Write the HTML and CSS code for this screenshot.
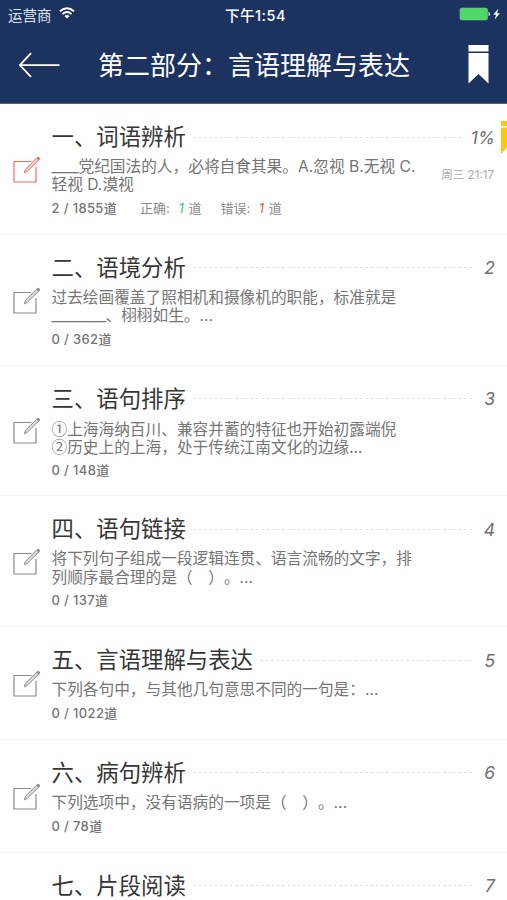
FILE: index.html
```
<!DOCTYPE html>
<html lang="zh-CN">
<head>
<meta charset="utf-8">
<title>第二部分：言语理解与表达</title>
<link rel="stylesheet" href="styles.css">
</head>
<body>
<svg class="defs" width="0" height="0">
  <symbol id="edit" viewBox="0 0 28 28">
    <path d="M18.500 5.500H1v20.500h22V11" fill="none" stroke="currentColor" stroke-width="1.200"/>
    <path d="M11.300 16.800l1.200-3.500L24.200 1.700q1-.8 1.900 0t.1 1.900L14.300 15.300z" fill="currentColor" fill-opacity=".3" stroke="currentColor" stroke-width="1"/>
    <path d="M23.500 2.300l2.200 2.200 1.300-1.700-1.600-1.800z" fill="currentColor"/>
  </symbol>
</svg>
<header class="top">
  <div class="status">
    <div class="carrier">运营商
      <svg width="16" height="12" viewBox="0 0 16 12" fill="none" stroke="#fff" stroke-width="1.9"><path d="M1 4.300Q8-1.900 15 4.300M3.500 7Q8 3.100 12.500 7"/><path d="M8 11.600L5.500 9Q8 7 10.500 9z" fill="#fff" stroke="none"/></svg>
    </div>
    <div class="clock">下午1:54</div>
    <div class="power">
      <svg width="42" height="14" viewBox="0 0 42 14"><rect x="1" y="1" width="27.600" height="12" rx="1.800" fill="#4cd964" stroke="#8fb3a5" stroke-width=".6"/><path d="M29.500 5q1.600.2 1.600 2T29.500 9z" fill="#dfe6ee"/><path d="M39.500 1.500L34.300 7.700h2.800l-1.400 4.900 5.200-6.300h-2.900z" fill="#fff"/></svg>
    </div>
  </div>
  <div class="nav">
    <svg class="back" width="42" height="26" viewBox="0 0 42 26" fill="none" stroke="#fff" stroke-width="1.800"><path d="M12 1.200L.9 13.200 12 24.800M.9 13.200H40.500"/></svg>
    <h1>第二部分：言语理解与表达</h1>
    <svg class="mark" width="21" height="39" viewBox="0 0 21 39" fill="#fff"><path d="M.5 0h20v6.500H.5zM.5 8h20v30.500L10.500 29 .5 38.500z"/></svg>
  </div>
</header>
<main>
  <section class="row active">
    <svg class="icon"><use href="#edit"/></svg>
    <div class="body">
      <div class="head"><h2>一、词语辨析</h2><i class="dots"></i><em>1%</em></div>
      <p><span class="blank">____</span>党纪国法的人，必将自食其果。A.忽视 B.无视 C.<br>轻视 D.漠视</p>
      <div class="meta"><b>2 / 1855道</b><span class="right">正确: <em>1</em> 道</span><span class="wrong">错误: <em>1</em> 道</span></div>
      <time>周三 21:17</time>
    </div>
    <svg class="flag" width="6" height="33" viewBox="0 0 6 33"><path d="M0 0h6v5H0zM0 6.500h6v20L0 33z" fill="#fcc80c"/></svg>
  </section>
  <section class="row">
    <svg class="icon"><use href="#edit"/></svg>
    <div class="body">
      <div class="head"><h2>二、语境分析</h2><i class="dots"></i><em>2</em></div>
      <p>过去绘画覆盖了照相机和摄像机的职能，标准就是<br><span class="blank">________</span>、栩栩如生。...</p>
      <div class="meta"><b>0 / 362道</b></div>
    </div>
  </section>
  <section class="row">
    <svg class="icon"><use href="#edit"/></svg>
    <div class="body">
      <div class="head"><h2>三、语句排序</h2><i class="dots"></i><em>3</em></div>
      <p class="cjk">①上海海纳百川、兼容并蓄的特征也开始初露端倪<br>②历史上的上海，处于传统江南文化的边缘...</p>
      <div class="meta"><b>0 / 148道</b></div>
    </div>
  </section>
  <section class="row">
    <svg class="icon"><use href="#edit"/></svg>
    <div class="body">
      <div class="head"><h2>四、语句链接</h2><i class="dots"></i><em>4</em></div>
      <p>将下列句子组成一段逻辑连贯、语言流畅的文字，排<br>列顺序最合理的是（　）。...</p>
      <div class="meta"><b>0 / 137道</b></div>
    </div>
  </section>
  <section class="row">
    <svg class="icon"><use href="#edit"/></svg>
    <div class="body">
      <div class="head"><h2>五、言语理解与表达</h2><i class="dots"></i><em>5</em></div>
      <p>下列各句中，与其他几句意思不同的一句是：...</p>
      <div class="meta"><b>0 / 1022道</b></div>
    </div>
  </section>
  <section class="row">
    <svg class="icon"><use href="#edit"/></svg>
    <div class="body">
      <div class="head"><h2>六、病句辨析</h2><i class="dots"></i><em>6</em></div>
      <p>下列选项中，没有语病的一项是（　）。...</p>
      <div class="meta"><b>0 / 78道</b></div>
    </div>
  </section>
  <section class="row last">
    <div class="icon"></div>
    <div class="body">
      <div class="head"><h2>七、片段阅读</h2><i class="dots"></i><em>7</em></div>
    </div>
  </section>
</main>
</body>
</html>
```
FILE: styles.css
```
* { box-sizing: border-box; margin: 0; padding: 0; }
html, body { height: 900px; overflow: hidden; }
body {
  width: 507px;
  background: #fefefe;
  color: #757575;
  font-family: Inter, "Noto Sans CJK SC", sans-serif;
  text-spacing-trim: space-all;
  white-space: nowrap;
}
svg { display: block; flex: none; }
.defs { position: absolute; }

.top { height: 104px; background: #1c325f; color: #fff; border-bottom: 1px solid #4a5d86; }
.status {
  display: grid;
  grid-template-columns: 1fr auto 1fr;
  align-items: center;
  height: 28px;
  padding: 0 6px 0 8px;
  font-size: 14.500px;
}
.carrier { display: flex; align-items: center; gap: 7px; color: #dfe5f0; }
.carrier svg { margin-top: -2px; }
.clock { font-weight: 500; letter-spacing: .5px; margin-right: -2px; }
.power { display: flex; justify-content: flex-end; }
.nav { display: flex; align-items: center; height: 74px; padding: 0 18px 0 19px; }
.nav h1 { flex: 1; margin: 2px 0 0 37px; font-size: 26px; font-weight: 400; line-height: 40px; }
.back, .mark { margin-top: -1px; }

.row {
  display: flex;
  align-items: center;
  position: relative;
  height: 130.800px;
  padding: 0 12px 0 13px;
  border-bottom: 1px solid #f7f7f7;
}
.row:nth-child(n + 5) { height: 112.700px; }
.row.last { align-items: flex-start; height: 47px; border: 0; }
.icon { flex: none; width: 28px; height: 28px; margin-top: 2px; color: #8c8c8c; }
.active .icon { color: #e8705f; }
.body { flex: 1; align-self: flex-start; position: relative; margin-left: 10.500px; padding-top: 18px; }
.head { display: flex; align-items: center; height: 30px; margin-bottom: 6px; }
.last .head { margin-bottom: 0; }
h2 { color: #363636; font-size: 22.400px; font-weight: 400; line-height: 30px; }
.dots {
  flex: 1;
  height: 1px;
  margin: 0 10px 0 8px;
  background: repeating-linear-gradient(90deg, #dcdcdc 0 2px, transparent 2px 5.200px);
}
.head em { font-size: 17.500px; color: #707070; }
p { font-size: 15.680px; line-height: 18.300px; }
.blank { letter-spacing: -.4px; }
.cjk { font-family: "Noto Sans CJK SC", sans-serif; }
.meta { display: flex; align-items: center; height: 20px; margin-top: 3px; font-size: 13px; }
.meta b { font-weight: 500; letter-spacing: .35px; }
.meta span { color: #8a8a8a; }
.right { margin-left: 23px; }
.wrong { margin-left: 19px; }
.meta em { margin: 0 1px 0 5px; }
.right em { color: #35c77c; }
.wrong em { color: #ee5a4a; }
time { position: absolute; right: 1px; top: 62px; color: #aaa; font-size: 11.600px; line-height: 18px; }
.flag { position: absolute; right: 0; top: 17px; }
```
